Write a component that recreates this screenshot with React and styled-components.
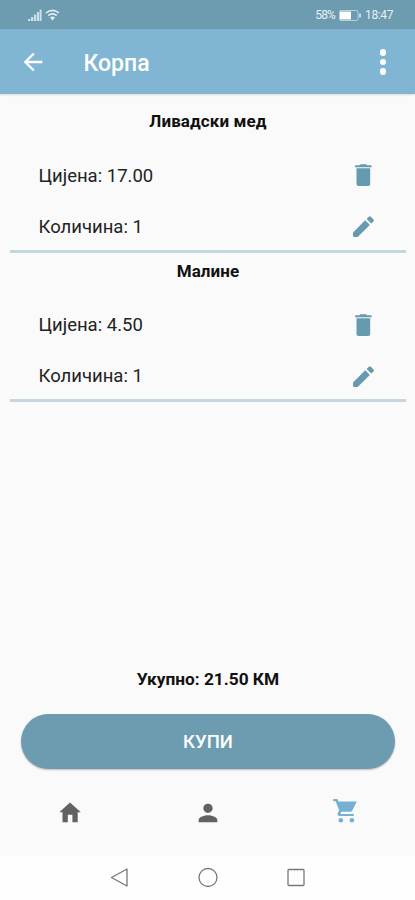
import styled, { createGlobalStyle } from 'styled-components';
import { MdArrowBack, MdPerson } from 'react-icons/md';

const GlobalStyle = createGlobalStyle`
  * {
    box-sizing: border-box;
  }

  body {
    margin: 0;
    background: #fafafa;
    font-family: Roboto, 'Noto Sans', sans-serif;
  }

  svg {
    display: block;
  }
`;

const Screen = styled.div`
  display: flex;
  flex-direction: column;
  height: 900px;
  overflow: hidden;
  color: #111;
`;

const StatusBar = styled.div`
  display: flex;
  align-items: center;
  justify-content: space-between;
  height: 29px;
  padding: 1px 22px 0 28px;
  background: #6d9bb0;
  color: #e6f0f4;
`;

const StatusGroup = styled.div`
  display: flex;
  align-items: center;
  gap: ${ ( { $gap } ) => $gap }px;
`;

const StatusText = styled.span`
  font-size: 12px;
  line-height: 14px;
  letter-spacing: ${ ( { $spacing } ) => $spacing }px;
`;

const AppBar = styled.header`
  display: flex;
  align-items: center;
  flex-shrink: 0;
  height: 65px;
  padding: 0 29px 0 19px;
  background: #80b5d3;
  color: #fff;
  box-shadow: 0 1px 2px rgba(0, 0, 0, 0.12);
`;

const AppTitle = styled.h1`
  flex: 1;
  margin: 0 0 0 36.5px;
  padding-top: 4px;
  font-size: 23px;
  font-weight: 500;
  line-height: 28px;
`;

const Dots = styled.div`
  display: grid;
  gap: 3px;
  padding-top: 1px;
`;

const Dot = styled.span`
  width: 6.5px;
  height: 6.5px;
  border-radius: 50%;
  background: #fff;
`;

const List = styled.main`
  flex: 1;
  padding: 0 9px 0 10px;
`;

const Item = styled.section`
  height: 149px;
  border-bottom: 3px solid #c3d8de;

  &:first-child {
    height: 159px;
    padding-top: 9px;
  }
`;

const ItemName = styled.h2`
  margin: 0;
  padding-top: 8px;
  font-size: 17px;
  font-weight: 700;
  line-height: 20px;
  letter-spacing: 0.1px;
  text-align: center;
`;

const ItemRow = styled.div`
  display: flex;
  align-items: center;
  justify-content: space-between;
  height: 51px;
  padding: 0 29px 0 28.5px;
  font-size: 18.5px;
  color: #222;

  h2 + & {
    margin-top: 18.5px;
  }

  section:first-child > & > span {
    padding-top: 1px;
  }

  svg {
    width: 28px;
    height: 28px;
    color: #659aaf;
  }
`;

const Total = styled.p`
  margin: 0 0 23px;
  padding-left: 1px;
  font-size: 17.3px;
  font-weight: 700;
  line-height: 24px;
  text-align: center;
`;

const BuyButton = styled.button`
  flex-shrink: 0;
  height: 55px;
  margin: 0 20px 0 21px;
  border: 0;
  border-radius: 28px;
  background: #6d9cb1;
  color: #fff;
  font-family: inherit;
  font-size: 18.5px;
  font-weight: 500;
  box-shadow: 0 1px 2px rgba(0, 0, 0, 0.25);
`;

const TabBar = styled.nav`
  display: grid;
  grid-template-columns: repeat(3, 138.3px);
  justify-items: center;
  height: 87px;
  padding: 29px 0 0 0.5px;
`;

const Tab = styled.div`
  padding-top: ${ ( { $drop } ) => $drop || 0 }px;
  color: ${ ( { $active } ) => ( $active ? '#74b1d3' : '#626262' ) };
`;

const SystemBar = styled.footer`
  display: flex;
  justify-content: center;
  gap: 64px;
  height: 44px;
  padding-top: 9px;
  background: #fefefe;
`;

const itens = [
  { naziv: 'Ливадски мед', cijena: '17.00', kolicina: 1 },
  { naziv: 'Малине', cijena: '4.50', kolicina: 1 }
];

function SignalIcon() {
  return (
    <svg width="14" height="13" viewBox="0 0 14 13" fill="currentColor">
      <path d="M0 10h2.300v2H0zM3 8h2.300v4H3zM6 5.500h2.300V12H6zM9 3h2v9H9zM11.600 0.500h2V12h-2z" opacity="0.8" />
    </svg>
  );
}

function WifiIcon() {
  return (
    <svg width="15" height="12" viewBox="0 0 15 12" fill="none" stroke="currentColor" strokeWidth="1.6">
      <path d="M1 4Q7.500 -1.200 14 4M3.300 6.500Q7.500 3.200 11.700 6.500" />
      <path d="M5 8.500Q7.500 6.700 10 8.500L7.500 11.500z" fill="currentColor" stroke="none" />
    </svg>
  );
}

function BatteryIcon() {
  return (
    <svg width="22" height="11" viewBox="0 0 22 11" fill="none" stroke="currentColor">
      <rect x="0.500" y="0.500" width="18.500" height="10" rx="1.500" opacity="0.6" />
      <rect x="1.500" y="2" width="10" height="7" fill="#fff" stroke="#fff" />
      <path d="M21 3.500v4" strokeWidth="1.500" />
    </svg>
  );
}

function TrashIcon() {
  return (
    <svg viewBox="0 0 28 28" fill="currentColor">
      <path d="M6 5.200q0-1 1-1h3.500l1-1h5.500l1 1h3.700q1 0 1 1v1H6z" />
      <path d="M7.500 7.300h13.700V23q0 2-2 2h-9.700q-2 0-2-2z" />
    </svg>
  );
}

function PencilIcon() {
  return (
    <svg viewBox="0 0 28 28" fill="currentColor">
      <path d="M4 20.500L16.200 8.300l4.600 4.600L8.700 24.900H5.200Q4 24.900 4 23.700z" />
      <path d="M17.600 6.900l2.200-2.200q1-1 2 0l2.700 2.700q1 1 0 2l-2.200 2.200z" />
    </svg>
  );
}

function HomeIcon() {
  return (
    <svg width="28" height="28" viewBox="0 0 28 28" fill="currentColor">
      <path d="M14 4.500L3.300 14.300h3.200v10h5.300v-7.500h4.600v7.500h5.300v-10h3.100z" />
    </svg>
  );
}

function CartIcon() {
  return (
    <svg width="28" height="28" viewBox="0 0 28 28" fill="currentColor">
      <path d="M1.200 1H5.400L6.600 3.500H24.800L20.300 12.600Q19.700 13.700 18.500 13.700H9.300L8.300 15.900H21.800V18H7.200Q4.800 17.400 5.700 15.100L7.200 12.500L3.600 3.300H1.200z" />
      <circle cx="8.800" cy="22.200" r="2.300" />
      <circle cx="19.900" cy="22.200" r="2.300" />
    </svg>
  );
}

function CartItem( { item } ) {
  return (
    <Item>
      <ItemName>{ item.naziv }</ItemName>
      <ItemRow>
        <span>Цијена: { item.cijena }</span>
        <TrashIcon />
      </ItemRow>
      <ItemRow>
        <span>Количина: { item.kolicina }</span>
        <PencilIcon />
      </ItemRow>
    </Item>
  );
}

export default function App() {
  return (
    <>
      <GlobalStyle />
      <Screen>
        <StatusBar>
          <StatusGroup $gap={ 3 }>
            <SignalIcon />
            <WifiIcon />
          </StatusGroup>
          <StatusGroup $gap={ 4 }>
            <StatusText $spacing={ -0.8 }>58%</StatusText>
            <BatteryIcon />
            <StatusText $spacing={ -0.4 }>18:47</StatusText>
          </StatusGroup>
        </StatusBar>
        <AppBar>
          <MdArrowBack size={ 28 } />
          <AppTitle>Корпа</AppTitle>
          <Dots>
            <Dot />
            <Dot />
            <Dot />
          </Dots>
        </AppBar>
        <List>
          { itens.map( ( item ) => <CartItem key={ item.naziv } item={ item } /> ) }
        </List>
        <Total>Укупно: 21.50 КМ</Total>
        <BuyButton>КУПИ</BuyButton>
        <TabBar>
          <Tab><HomeIcon /></Tab>
          <Tab $drop={ 1 }><MdPerson size={ 28 } /></Tab>
          <Tab $active><CartIcon /></Tab>
        </TabBar>
        <SystemBar>
          <svg width="24" height="24" viewBox="0 0 24 24" fill="none" stroke="#777" strokeWidth="1.300" strokeLinejoin="round">
            <path d="M3.500 12.500L19 4v17z" />
          </svg>
          <svg width="24" height="24" viewBox="0 0 24 24" fill="none" stroke="#777" strokeWidth="1.300">
            <circle cx="12" cy="12.500" r="9" />
          </svg>
          <svg width="24" height="24" viewBox="0 0 24 24" fill="none" stroke="#777" strokeWidth="1.300">
            <rect x="4" y="4.500" width="16" height="16" rx="1" />
          </svg>
        </SystemBar>
      </Screen>
    </>
  );
}
